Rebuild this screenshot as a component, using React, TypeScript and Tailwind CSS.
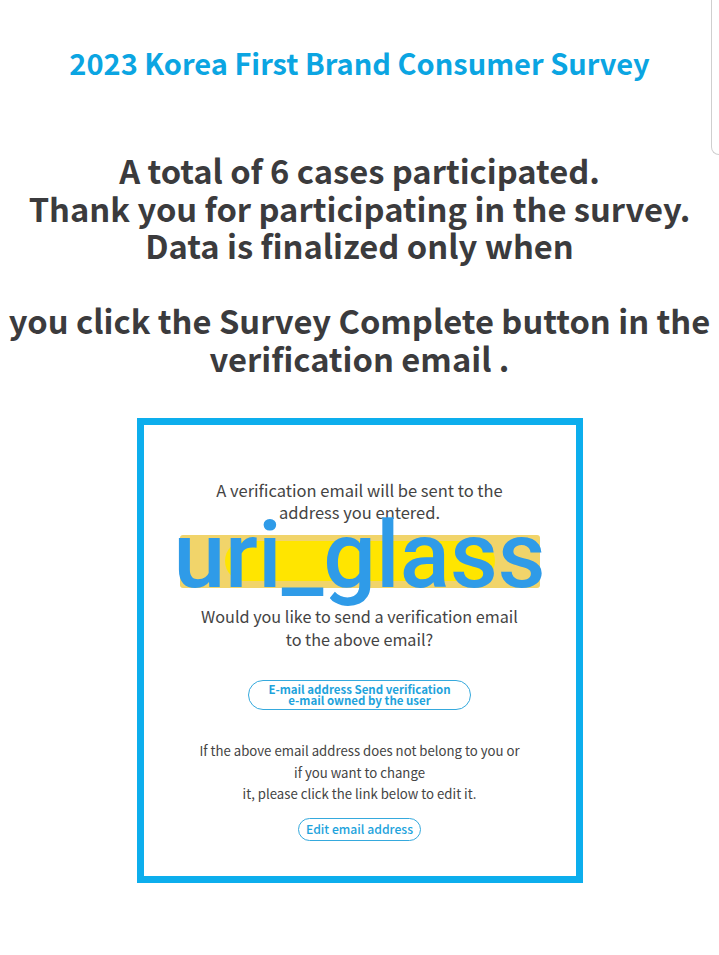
export default function App() {
  return (
    <div
      className="relative min-h-[955px] w-full bg-white text-center"
      style={{ fontFamily: '"Noto Sans CJK KR", "Noto Sans", sans-serif' }}
    >
      <div className="absolute right-0 top-0 h-[155px] w-[8px] rounded-bl-[8px] border-b border-l border-[#cfcfcf]" />

      <h1 className="pt-[42px] text-[29px] font-bold leading-[40px] text-[#0ba5e2]">
        2023 Korea First Brand Consumer Survey
      </h1>

      <div className="mt-[69px] text-[32.7px] font-bold leading-[37.5px] text-[#3b3b3d]">
        A total of 6 cases participated.
        <br />
        Thank you for participating in the survey.
        <br />
        Data is finalized only when
        <br />
        <br />
        you click the Survey Complete button in the
        <br />
        verification email .
      </div>

      <div className="mx-auto mt-[42px] flex h-[465px] w-[446px] flex-col items-center border-[7px] border-[#0daeed] pt-[54px]">
        <p className="text-[16.5px] leading-[22px] text-[#444]">
          A verification email will be sent to the
          <br />
          address you entered.
        </p>

        <div className="relative -mt-[17px] h-[87px] w-full">
          <div className="absolute left-[36px] top-[29px] h-[53px] w-[360px] rounded-[3px] bg-[#f1d46a]">
            <div className="mx-auto mt-[6px] h-[40px] w-[270px] rounded-full bg-[#ffe500]" />
          </div>
          <span
            className="relative block text-[93px] font-medium leading-[100px] text-[#2f9be8]"
            style={{ fontFamily: 'Roboto, "Liberation Sans", sans-serif' }}
          >
            uri_glass
          </span>
        </div>

        <p className="mt-[12px] text-[16.2px] leading-[23px] text-[#444]">
          Would you like to send a verification email
          <br />
          to the above email?
        </p>

        <button className="mt-[29px] flex h-[30px] w-[223px] flex-col items-center justify-center rounded-full border border-[#35a9dd] text-[11.5px] font-bold leading-[11px] text-[#1ea3dc]">
          <span>E-mail address Send verification</span>
          <span>e-mail owned by the user</span>
        </button>

        <p className="mt-[30px] text-[13.2px] leading-[21.5px] text-[#444]">
          If the above email address does not belong to you or
          <br />
          if you want to change
          <br />
          it, please click the link below to edit it.
        </p>

        <button className="mt-[13px] flex h-[23px] w-[123px] items-center justify-center rounded-full border border-[#35a9dd] text-[12.2px] font-medium text-[#1ea3dc]">
          Edit email address
        </button>
      </div>
    </div>
  );
}
